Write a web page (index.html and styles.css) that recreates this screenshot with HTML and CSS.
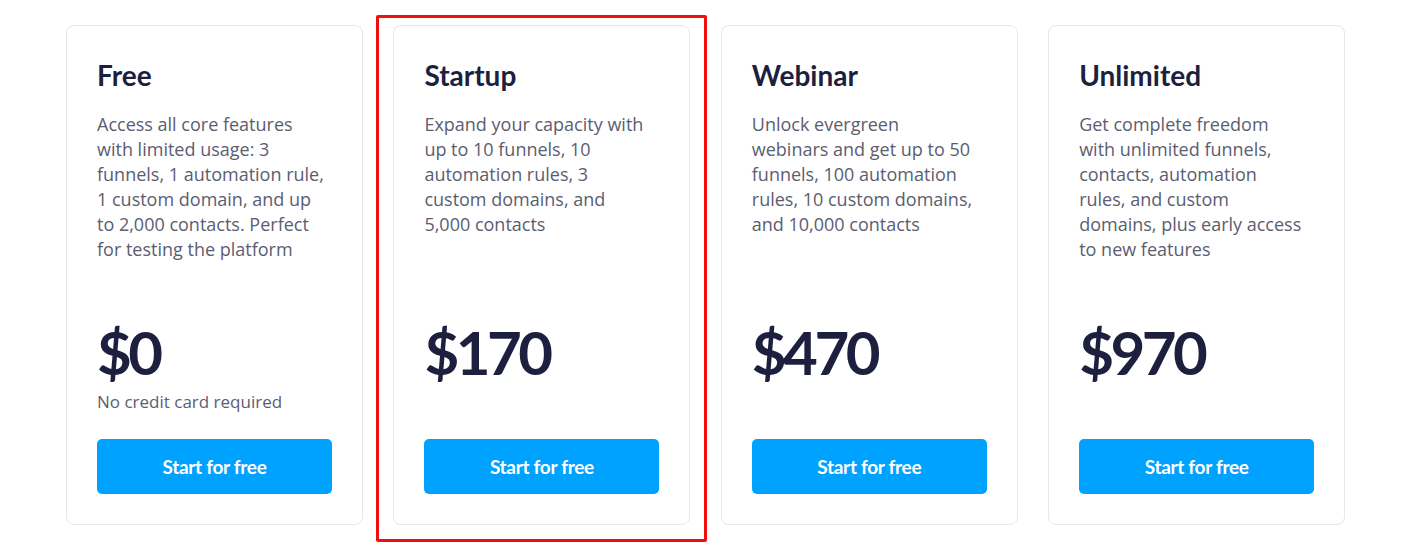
FILE: index.html
```html
<!DOCTYPE html>
<html>
<head>
    <title>Pricing</title>
    <link rel="stylesheet" href="styles.css">
</head>
<body>
    <div class="plans">
        <div class="plan">
            <h2>Free</h2>
            <p class="desc">Access all core features<br>with limited usage: 3<br>funnels, 1 automation rule,<br>1 custom domain, and up<br>to 2,000 contacts. Perfect<br>for testing the platform</p>
            <div class="price">$0</div>
            <p class="note">No credit card required</p>
            <a class="btn" href="#">Start for free</a>
        </div>
        <div class="plan selected">
            <h2>Startup</h2>
            <p class="desc">Expand your capacity with<br>up to 10 funnels, 10<br>automation rules, 3<br>custom domains, and<br>5,000 contacts</p>
            <div class="price">$170</div>
            <a class="btn" href="#">Start for free</a>
            <div class="highlight"></div>
        </div>
        <div class="plan">
            <h2>Webinar</h2>
            <p class="desc">Unlock evergreen<br>webinars and get up to 50<br>funnels, 100 automation<br>rules, 10 custom domains,<br>and 10,000 contacts</p>
            <div class="price">$470</div>
            <a class="btn" href="#">Start for free</a>
        </div>
        <div class="plan">
            <h2>Unlimited</h2>
            <p class="desc">Get complete freedom<br>with unlimited funnels,<br>contacts, automation<br>rules, and custom<br>domains, plus early access<br>to new features</p>
            <div class="price">$970</div>
            <a class="btn" href="#">Start for free</a>
        </div>
    </div>
</body>
</html>
```

FILE: styles.css
```css
body {
    margin: 0;
    background: #fff;
    font-family: "Lato", "Noto Sans", sans-serif;
}

.plans {
    display: grid;
    grid-template-columns: repeat(4, 297px);
    gap: 30.4px;
    padding: 25px 0 25px 66px;
}

.plan {
    position: relative;
    display: flex;
    flex-direction: column;
    height: 500px;
    box-sizing: border-box;
    padding: 30px 30px 30px 30px;
    border: 1px solid #e6e7eb;
    border-radius: 8px;
}

.plan h2 {
    margin: 0;
    font-size: 28px;
    line-height: 38px;
    font-weight: 700;
    color: #1d1f3f;
}

.desc {
    margin: 18px 0 0;
    height: 205px;
    white-space: nowrap;
    font-family: "Open Sans", "Noto Sans", sans-serif;
    font-size: 18px;
    line-height: 25px;
    color: #5b5d71;
}

.price {
    font-size: 60px;
    line-height: 70px;
    font-weight: 700;
    color: #1d1f3f;
    letter-spacing: -3.5px;
}

.note {
    margin: 3px 0 0;
    font-family: "Open Sans", "Noto Sans", sans-serif;
    font-size: 17px;
    line-height: 24px;
    color: #5b5d71;
}

.btn {
    margin-top: auto;
    display: block;
    height: 55px;
    line-height: 55px;
    text-align: center;
    background: #00a2ff;
    color: #fff;
    border-radius: 5px;
    font-size: 19px;
    font-weight: 700;
    text-decoration: none;
    letter-spacing: -0.3px;
}

/* red selection frame around the chosen plan */
.highlight {
    position: absolute;
    top: -11px;
    left: -18px;
    right: -18px;
    bottom: -18px;
    border: 3px solid #f00f0f;
    border-radius: 2px;
    pointer-events: none;
}
```
